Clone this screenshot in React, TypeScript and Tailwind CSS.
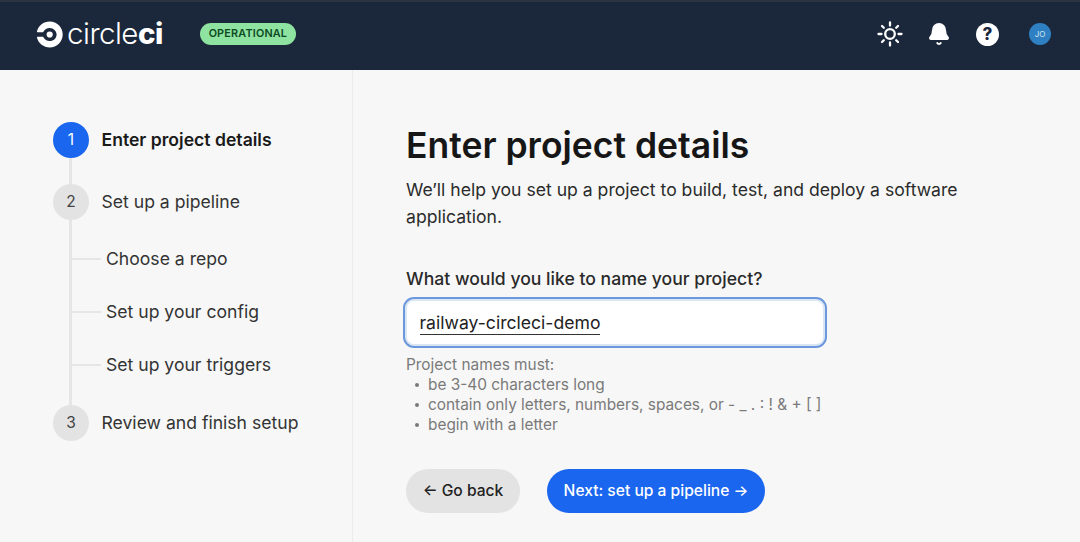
import { Bell } from "lucide-react";

const font = "font-['Inter',sans-serif]";

function CircleLogo() {
  return (
    <svg width="27" height="27" viewBox="0 0 27 27" fill="#fff">
      <circle cx="13.7" cy="13.5" r="3.1" />
      <path d="M13.7 0.5C7.6 0.5 2.5 4.6 1 10.2c0 .1-.1.2-.1.3 0 .4.3.7.7.7h5.2c.3 0 .5-.2.6-.4 1.1-2.3 3.5-3.9 6.3-3.9 3.8 0 6.9 3 6.9 6.6s-3.100 6.600-6.900 6.600c-2.800 0-5.200-1.600-6.300-3.900-.1-.3-.3-.4-.6-.4H1.600c-.4 0-.7.3-.7.7 0 .1 0 .2.100.3C2.500 22.400 7.600 26.500 13.700 26.500c7.200 0 13-5.800 13-13s-5.800-13-13-13z" />
    </svg>
  );
}

function SunIcon() {
  return (
    <svg width="26" height="26" viewBox="0 0 26 26" fill="none" stroke="#fff" strokeWidth="2.3" strokeLinecap="round">
      <circle cx="13" cy="13" r="4.8" />
      <path d="M13 1.500v3M13 21.500v3M1.500 13h3M21.500 13h3M5 5l1.800 1.800M19.200 19.200l1.800 1.800M5 21l1.800-1.800M19.200 6.800L21 5" />
    </svg>
  );
}

function Step({ n, label, active }: { n: number; label: string; active?: boolean }) {
  return (
    <div className="relative flex h-[36px] items-center gap-[12.5px]">
      <div
        className={
          active
            ? "flex h-[36px] w-[36px] items-center justify-center rounded-full bg-[#1a66ee] text-[15.5px] text-white"
            : "flex h-[36px] w-[36px] items-center justify-center rounded-full bg-[#e3e3e3] text-[15.5px] text-[#444]"
        }
      >
        {n}
      </div>
      <span className={active ? "text-[17.6px] font-semibold text-[#1a1a1a]" : "text-[17.6px] text-[#333]"}>{label}</span>
    </div>
  );
}

function SubStep({ label }: { label: string }) {
  return (
    <div className="flex h-[27px] items-center">
      <div className="ml-[17px] h-[2px] w-[31px] bg-[#e6e6e6]" />
      <span className="ml-[5px] pt-[2px] text-[17.6px] text-[#333]">{label}</span>
    </div>
  );
}

function Rule({ children }: { children: string }) {
  return (
    <li className="flex items-center">
      <span className="ml-[9px] h-[4px] w-[4px] rounded-full bg-[#7a7a7a]" />
      <span className="ml-[9px]">{children}</span>
    </li>
  );
}

export default function App() {
  return (
    <div className={`${font} flex h-[542px] w-[1080px] flex-col overflow-hidden bg-[#f7f7f7]`}>
      <header className="flex h-[70px] shrink-0 items-center border-t-[2px] border-[#2c3442] bg-[#1b273a] pb-[4px] pl-[36px] pr-[29px]">
        <CircleLogo />
        <span className="ml-[4px] text-[29.5px] leading-none font-light tracking-[-0.5px] text-white">
          circle<span className="font-extrabold">ci</span>
        </span>
        <span className="ml-[37px] flex h-[22px] w-[96px] items-center justify-center rounded-full bg-[#8fe3a0] text-[10.8px] font-semibold tracking-[0.2px] text-[#0b4a22]">
          OPERATIONAL
        </span>
        <div className="ml-auto flex items-center">
          <SunIcon />
          <Bell size={24} fill="#fff" strokeWidth={2} className="ml-[24px] text-white" />
          <span className="ml-[25px] flex h-[23px] w-[23px] items-center justify-center rounded-full bg-white text-[17px] font-extrabold leading-none text-[#1b273a]">
            ?
          </span>
          <span className="ml-[30px] flex h-[22px] w-[22px] items-center justify-center rounded-full bg-[#2f80c2] text-[8px] text-[#cfe4f5]">
            JO
          </span>
        </div>
      </header>
      <div className="flex min-h-0 flex-1">
        <aside className="w-[353px] shrink-0 border-r border-[#ececec] pl-[53px] pt-[52px]">
          <div className="relative flex flex-col">
            <div className="absolute bottom-[18px] left-[15.5px] top-[18px] w-[3px] bg-[#e6e6e6]" />
            <Step n={1} label="Enter project details" active />
            <div className="mt-[26px]">
              <Step n={2} label="Set up a pipeline" />
            </div>
            <div className="mt-[25px] flex flex-col gap-[26px]">
              <SubStep label="Choose a repo" />
              <SubStep label="Set up your config" />
              <SubStep label="Set up your triggers" />
            </div>
            <div className="mt-[27px]">
              <Step n={3} label="Review and finish setup" />
            </div>
          </div>
        </aside>
        <main className="flex-1 pl-[53px] pt-[53px]">
          <h1 className="text-[35.5px] leading-[46px] font-semibold text-[#161616]">Enter project details</h1>
          <p className="mt-[7px] w-[600px] text-[17.6px] leading-[27px] text-[#2b2b2b]">
            We’ll help you set up a project to build, test, and deploy a software application.
          </p>
          <label className="mt-[35px] block text-[17.6px] leading-[27px] font-medium text-[#2a2a2a]">
            What would you like to name your project?
          </label>
          <div className="-ml-[3px] mt-[5px] flex h-[51px] w-[424px] items-center rounded-[11px] border-[2.5px] border-[#6b97dc] bg-white pl-[14.5px] pt-[2px] shadow-[inset_0_0_0_2px_#dbe6f5]">
            <span className="border-b border-[#333] text-[17.6px] leading-[22px] text-[#222]">railway-circleci-demo</span>
          </div>
          <div className="mt-[7px] text-[15.4px] leading-[20px] text-[#7a7a7a]">
            <p>Project names must:</p>
            <ul>
              <Rule>be 3-40 characters long</Rule>
              <Rule>contain only letters, numbers, spaces, or - _ . : ! &amp; + [ ]</Rule>
              <Rule>begin with a letter</Rule>
            </ul>
          </div>
          <div className="mt-[34px] flex gap-[27px]">
            <button className="h-[44px] w-[114px] rounded-full bg-[#e3e3e3] text-[15.6px] font-medium text-[#222]">
              ← Go back
            </button>
            <button className="h-[44px] w-[218px] rounded-full bg-[#1a66ee] text-[15.6px] font-medium text-white">
              Next: set up a pipeline →
            </button>
          </div>
        </main>
      </div>
    </div>
  );
}
